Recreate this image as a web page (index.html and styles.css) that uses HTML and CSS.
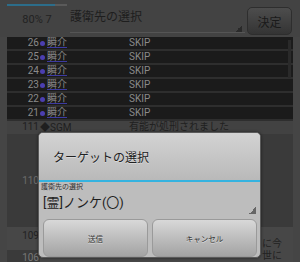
FILE: index.html
```html
<!DOCTYPE html>
<html lang="ja">
<head>
    <meta charset="UTF-8">
    <meta name="viewport" content="width=device-width, initial-scale=1.0">
    <title>護衛先の選択</title>
    <link rel="stylesheet" href="styles.css">
</head>
<body>
    <div class="screen">
        <div class="header">
            <div class="status">
                <div class="progress"><div class="progress-fill" style="width: 80%"></div></div>
                <div class="status-text">80% 7</div>
            </div>
            <div class="header-spinner">護衛先の選択</div>
            <button type="button" class="decide-btn">決定</button>
        </div>
        <div class="log">
            <div class="row skip"><span class="num">26</span><span class="name"><i class="dot"></i><u>瞬介</u></span><span class="msg">SKIP</span></div>
            <div class="row skip"><span class="num">25</span><span class="name"><i class="dot"></i><u>瞬介</u></span><span class="msg">SKIP</span></div>
            <div class="row skip"><span class="num">24</span><span class="name"><i class="dot"></i><u>瞬介</u></span><span class="msg">SKIP</span></div>
            <div class="row skip"><span class="num">23</span><span class="name"><i class="dot"></i><u>瞬介</u></span><span class="msg">SKIP</span></div>
            <div class="row skip"><span class="num">22</span><span class="name"><i class="dot"></i><u>瞬介</u></span><span class="msg">SKIP</span></div>
            <div class="row skip"><span class="num">21</span><span class="name"><i class="dot"></i><u>瞬介</u></span><span class="msg">SKIP</span></div>
            <div class="row event"><span class="num">111</span><span class="name">◆SGM</span><span class="msg">有能が処刑されました</span></div>
            <div class="row night"><span class="num">110</span><span class="name"></span><span class="msg"></span></div>
            <div class="row talk"><span class="num">109</span><span class="name"></span><span class="msg tail"><br>に今</span></div>
            <div class="row talk split"><span class="num">106</span><span class="name"></span><span class="msg tail">世に</span></div>
            <div class="scroll-thumb"></div>
        </div>

        <div class="dialog">
            <div class="dialog-title">ターゲットの選択</div>
            <div class="dialog-divider"></div>
            <div class="field-label">護衛先の選択</div>
            <div class="spinner">[霊]ノンケ(〇)</div>
            <div class="dialog-buttons">
                <button type="button" class="dialog-btn">送信</button>
                <button type="button" class="dialog-btn">キャンセル</button>
            </div>
        </div>
    </div>
</body>
</html>
```

FILE: styles.css
```css
* {
    box-sizing: border-box;
}
body {
    margin: 0;
    background: #454545;
    font-family: Roboto, "Noto Sans CJK JP", sans-serif;
}
.screen {
    position: relative;
    width: 300px;
    height: 262px;
    overflow: hidden;
}
.header {
    display: flex;
    align-items: flex-start;
    height: 37px;
    padding-left: 7px;
    background: #434343;
}
.status {
    width: 60px;
    padding-top: 4px;
}
.progress {
    height: 2px;
    background: #5a5a5a;
}
.progress-fill {
    height: 100%;
    background: #2c6d8a;
}
.status-text {
    margin-top: 8px;
    text-align: center;
    font-size: 11px;
    line-height: 12px;
    color: #222;
}
.header-spinner {
    width: 175px;
    height: 33px;
    margin-left: 3px;
    padding-top: 10px;
    font-size: 12px;
    line-height: 14px;
    color: #1e1e1e;
    border-bottom: 1px solid #555;
    background: linear-gradient(to top left, #2a2a2a 50%, transparent 50%) no-repeat right 3px bottom 0 / 7px 7px;
}
.decide-btn {
    width: 45px;
    height: 28px;
    margin: 7px 0 0 2px;
    padding: 0;
    border: 1px solid #2e2e2e;
    border-radius: 5px;
    background: linear-gradient(#4d4d4d, #343434);
    font: 12px "Noto Sans CJK JP", sans-serif;
    color: #1a1a1a;
}
.log {
    position: relative;
    margin: 0 7px;
    height: 225px;
    background: #1c1c1c;
    overflow: hidden;
}
.row {
    display: grid;
    grid-template-columns: 33px 89px 1fr;
    font-size: 10px;
    line-height: 12px;
    white-space: nowrap;
}
.num {
    text-align: right;
    padding-right: 1px;
}
.name {
    display: flex;
    align-items: center;
}
.msg {
    overflow: hidden;
}
.msg.tail {
    padding-left: 133px;
}
.dot {
    width: 5px;
    height: 5px;
    margin-right: 2px;
    border-radius: 50%;
    background: #4b3fb0;
}
.name u {
    text-decoration-color: #3d3aa0;
}
.row.skip {
    height: 14px;
    border-bottom: 2px solid #2e2e2e;
    background: #1b1b1b;
    color: #8a8a8a;
}
.row.event {
    height: 13px;
    background: #424242;
    color: #1f1f1f;
}
.row.night {
    height: 93px;
    align-items: center;
    background: #3a3a3a;
    color: #6c6c6c;
}
.row.talk {
    height: 23px;
    align-items: start;
    line-height: 11px;
    background: #474747;
    color: #222;
}
.row.talk .num {
    padding-top: 3px;
}
.row.split .num {
    height: 100%;
    padding-top: 2px;
    background: #3a3a3a;
    color: #777;
}
.scroll-thumb {
    position: absolute;
    top: 3px;
    right: 2px;
    width: 3px;
    height: 38px;
    background: #2a2a2a;
}
.dialog {
    position: absolute;
    left: 38px;
    top: 132px;
    width: 223px;
    height: 126px;
    display: flex;
    flex-direction: column;
    border: 1px solid #5a5a5a;
    border-radius: 5px;
    background: #bdbdbd;
    box-shadow: 0 0 3px rgba(0, 0, 0, 0.5);
    overflow: hidden;
}
.dialog-title {
    height: 47px;
    display: flex;
    align-items: center;
    padding-left: 14px;
    font-size: 12px;
    color: #222;
    background: linear-gradient(#d3d3d3, #b9b9b9);
    text-shadow: 0 1px 0 rgba(255, 255, 255, 0.4);
}
.dialog-divider {
    height: 2px;
    background: #35b3e0;
}
.field-label {
    padding-left: 2px;
    font-size: 7px;
    line-height: 10px;
    color: #333;
}
.spinner {
    height: 24px;
    padding-left: 4px;
    font-size: 13px;
    line-height: 22px;
    color: #1e1e1e;
    background: linear-gradient(to top left, #666 50%, transparent 50%) no-repeat right 4px bottom 2px / 7px 7px;
}
.dialog-buttons {
    display: flex;
    gap: 4px;
    padding: 3px 3px 0 4px;
}
.dialog-btn {
    flex: 1;
    height: 38px;
    padding: 0;
    border: 1px solid #9a9a9a;
    border-radius: 6px;
    background: linear-gradient(#d8d8d8, #a3a3a3);
    font: 7.5px "Noto Sans CJK JP", sans-serif;
    color: #333;
    text-shadow: 0 1px 0 rgba(255, 255, 255, 0.5);
}
```
